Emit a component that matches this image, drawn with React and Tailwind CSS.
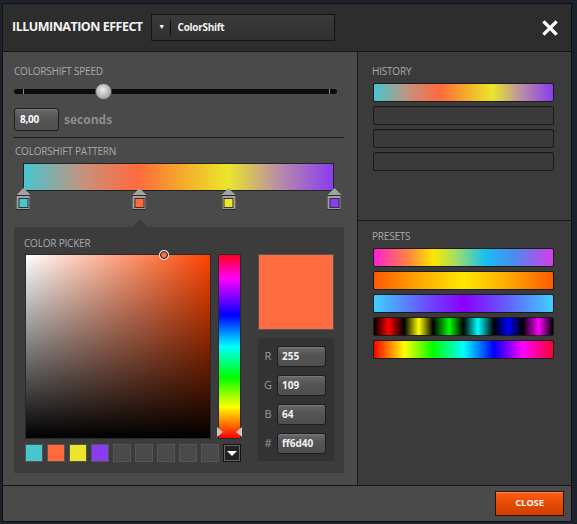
import React from "react";

const patternGradient =
  "bg-[linear-gradient(to_right,#48c6cf_0%,#c9907a_20%,#ff6a3d_37%,#f5a52c_50%,#ebe62a_66%,#b98fa5_82%,#8a3cf0_100%)]";

const presets = [
  "bg-[linear-gradient(to_right,#ff1fd0_0%,#ff8a3a_20%,#ffe600_33%,#a8e060_45%,#18c0f0_62%,#4a8cf0_78%,#d53ce6_100%)]",
  "bg-[linear-gradient(to_right,#ff5a00_0%,#ffa800_25%,#ffe800_50%,#ffa800_75%,#ff5a00_100%)]",
  "bg-[linear-gradient(to_right,#3fd0ff_0%,#6a4cff_30%,#8a00ff_50%,#6a4cff_70%,#3fd0ff_100%)]",
  "bg-[linear-gradient(to_right,#000_0%,#ff0000_8%,#000_17%,#ffff00_25%,#000_33%,#00ff00_42%,#000_50%,#00ffff_58%,#000_67%,#0000ff_75%,#000_83%,#ff00ff_92%,#000_100%)]",
  "bg-[linear-gradient(to_right,#ff0000_0%,#ffff00_17%,#00ff00_33%,#00ffff_50%,#0000ff_67%,#ff00ff_83%,#ff0030_100%)]",
];

const stops = [
  { left: "left-[0%]", color: "bg-[#48c6cf]" },
  { left: "left-[37.3%]", color: "bg-[#ff6a3d]" },
  { left: "left-[66.2%]", color: "bg-[#ebe62a]" },
  { left: "left-[100%]", color: "bg-[#8a3cf0]" },
];

const swatches = [
  "bg-[#48c6cf]",
  "bg-[#ff6a3d]",
  "bg-[#ebe62a]",
  "bg-[#8a3cf0]",
  "bg-[#4a4a4a]",
  "bg-[#4a4a4a]",
  "bg-[#4a4a4a]",
  "bg-[#4a4a4a]",
  "bg-[#4a4a4a]",
];

function Label({ children, className = "" }) {
  return (
    <div className={"text-[10px] leading-[12px] text-[#a9a9a9] tracking-[-0.2px] " + className}>
      {children}
    </div>
  );
}

function Field({ label, value }) {
  return (
    <div className="flex items-center h-[21px]">
      <span className="w-[19px] text-[11px] text-[#9a9a9a] text-center pl-[1px]">{label}</span>
      <div className="w-[49px] h-[21px] rounded-[3px] border border-[#1c1c1c] bg-[linear-gradient(to_bottom,#6a6a6a,#555_40%,#4e4e4e)] shadow-[inset_0_1px_0_#777] flex items-center pl-[4px] text-[10px] font-bold text-[#f2f2f2]">
        {value}
      </div>
    </div>
  );
}

function StopMarker({ left, color }) {
  return (
    <div className={"absolute -top-[3px] -translate-x-1/2 flex flex-col items-center " + left}>
      <div className="w-0 h-0 border-l-[7px] border-r-[7px] border-b-[7px] border-l-transparent border-r-transparent border-b-[#a3a3a3]" />
      <div className="w-[15px] h-[15px] bg-[#a0a0a0] border border-[#2a2a2a] p-[1.5px]">
        <div className={"w-full h-full border border-[#333] " + color} />
      </div>
    </div>
  );
}

export default function App() {
  return (
    <div
      className="w-[577px] h-[524px] bg-[#1d232c] pl-[2px] pt-[3px] overflow-hidden"
      style={{ fontFamily: '"Open Sans", "Noto Sans", sans-serif' }}
    >
      <div className="w-[570px] h-[519px] border border-[#111] flex flex-col bg-[#4a4a4a]">
        {/* header */}
        <div className="h-[48px] shrink-0 bg-[#2d2d2d] border-b border-[#151515] flex items-center pl-[9px] pr-[13px]">
          <span className="text-[12.5px] font-bold text-[#f4f4f4] tracking-[-0.5px]">ILLUMINATION EFFECT</span>
          <div className="ml-[8px] w-[184px] h-[27px] border border-[#141414] bg-[linear-gradient(to_bottom,#3a3a3a,#303030)] flex items-center">
            <span className="w-[18px] text-center text-[7px] text-white pl-[2px]">▼</span>
            <span className="w-px h-[16px] bg-[#111]" />
            <span className="ml-[7px] text-[10px] font-bold text-[#f2f2f2] tracking-[-0.3px]">ColorShift</span>
          </div>
          <svg className="ml-auto" width="16" height="16" viewBox="0 0 16 16">
            <path d="M2.5 2.5 L13.5 13.5 M13.5 2.5 L2.5 13.5" stroke="#fff" strokeWidth="3.2" strokeLinecap="square" />
          </svg>
        </div>

        {/* body */}
        <div className="flex-1 flex border-b border-[#151515]">
          {/* left panel */}
          <div className="w-[354px] shrink-0 bg-[#4a4a4a] pl-[11px] pr-[13px] pt-[13px] flex flex-col">
            <Label>COLORSHIFT SPEED</Label>
            <div className="relative mt-[6px] h-[17px] w-[323px] flex items-center">
              <div className="w-full h-[5px] rounded-full bg-[#0c0c0c]" />
              <div className="absolute left-[9px] top-[6px] w-px h-[5px] bg-[#888]" />
              <div className="absolute left-[315px] top-[6px] w-px h-[5px] bg-[#888]" />
              <div className="absolute left-[81px] top-0 w-[17px] h-[17px] rounded-full border border-[#555] bg-[radial-gradient(circle_at_45%_40%,#f0f0f0,#bdbdbd_45%,#8a8a8a)]" />
            </div>
            <div className="mt-[8px] flex items-center">
              <div className="w-[45px] h-[23px] rounded-[3px] border border-[#1e1e1e] bg-[linear-gradient(to_bottom,#6a6a6a,#555_45%,#4f4f4f)] shadow-[inset_0_1px_0_#777] flex items-center pl-[5px] text-[10px] font-bold text-white tracking-[-0.3px]">
                8,00
              </div>
              <span className="ml-[5px] text-[12px] font-bold text-[#8c8c8c]">seconds</span>
            </div>
            <div className="mt-[6px] h-px w-[330px] bg-[#1a1a1a]" />
            <Label className="mt-[7px] pl-[1px]">COLORSHIFT PATTERN</Label>

            <div className="ml-[9px] w-[311px]">
              <div className={"mt-[6px] h-[28px] border border-[#222] " + patternGradient} />
              <div className="relative h-[19px]">
                {stops.map((s, i) => (
                  <StopMarker key={i} left={s.left} color={s.color} />
                ))}
              </div>
            </div>

            {/* colour picker */}
            <div className="mt-[9px] ml-[118px] w-0 h-0 border-l-[8px] border-r-[8px] border-b-[8px] border-l-transparent border-r-transparent border-b-[#3c3c3c]" />
            <div className="w-[330px] h-[246px] bg-[#3c3c3c] pl-[11px] pt-[10px] flex flex-col">
              <Label className="-ml-[1px]">COLOR PICKER</Label>
              <div className="flex mt-[5px]">
                <div className="w-[216px] flex flex-col">
                  <div className="flex">
                    <div className="relative w-[186px] h-[185px] border border-[#2a2a2a] bg-[linear-gradient(to_top,#000,transparent),linear-gradient(to_right,#fff,#ff4300)]">
                      <div className="absolute left-[134px] -top-[4px] w-[8px] h-[8px] rounded-full border border-[#111] bg-[#ff6d40] shadow-[0_0_0_1px_#fff]" />
                    </div>
                    <div className="relative ml-[7px] w-[23px] h-[185px] border border-[#2a2a2a] bg-[linear-gradient(to_bottom,#ff0020_0%,#ff00ff_13%,#0000ff_33%,#00ffff_50%,#00ff00_67%,#ffff00_83%,#ff0000_100%)]">
                      <div className="absolute -left-[2px] top-[172px] w-0 h-0 border-t-[5px] border-b-[5px] border-l-[6px] border-t-transparent border-b-transparent border-l-[#c8c8c8]" />
                      <div className="absolute -right-[2px] top-[172px] w-0 h-0 border-t-[5px] border-b-[5px] border-r-[6px] border-t-transparent border-b-transparent border-r-[#c8c8c8]" />
                    </div>
                  </div>
                  <div className="mt-[5px] flex gap-[4px]">
                    {swatches.map((c, i) => (
                      <div key={i} className={"w-[18px] h-[18px] border border-[#555] " + c} />
                    ))}
                    <div className="w-[18px] h-[18px] bg-[#222] border border-[#111] shadow-[inset_0_0_0_1px_#666] flex items-center justify-center">
                      <div className="w-0 h-0 border-l-[5px] border-r-[5px] border-t-[5px] border-l-transparent border-r-transparent border-t-white" />
                    </div>
                  </div>
                </div>
                <div className="ml-[17px] w-[76px] flex flex-col">
                  <div className="h-[76px] bg-[#ff6d40] border border-[#555]" />
                  <div className="mt-[8px] h-[123px] bg-[#333] pt-[8px] flex flex-col gap-[8px]">
                    <Field label="R" value="255" />
                    <Field label="G" value="109" />
                    <Field label="B" value="64" />
                    <Field label="#" value="ff6d40" />
                  </div>
                </div>
              </div>
            </div>
          </div>

          {/* right panel */}
          <div className="flex-1 bg-[#3b3b3b] border-l border-[#1a1a1a] flex flex-col">
            <div className="h-[169px] pl-[14px] pt-[13px] border-b border-[#1a1a1a]">
              <Label>HISTORY</Label>
              <div className="mt-[6px] flex flex-col gap-[4px] pl-[1px]">
                <div className={"w-[181px] h-[19px] rounded-[2px] border border-[#1a1a1a] " + patternGradient} />
                <div className="w-[181px] h-[19px] rounded-[2px] border border-[#1a1a1a] bg-[#3a3a3a] shadow-[inset_0_1px_0_#333]" />
                <div className="w-[181px] h-[19px] rounded-[2px] border border-[#1a1a1a] bg-[#3a3a3a] shadow-[inset_0_1px_0_#333]" />
                <div className="w-[181px] h-[19px] rounded-[2px] border border-[#1a1a1a] bg-[#3a3a3a] shadow-[inset_0_1px_0_#333]" />
              </div>
            </div>
            <div className="pl-[14px] pt-[9px]">
              <Label>PRESETS</Label>
              <div className="mt-[6px] flex flex-col gap-[4px] pl-[1px]">
                {presets.map((p, i) => (
                  <div key={i} className={"w-[181px] h-[19px] rounded-[2px] border border-[#1a1a1a] " + p} />
                ))}
              </div>
            </div>
          </div>
        </div>

        {/* footer */}
        <div className="h-[35px] shrink-0 bg-[#4a4a4a] flex items-center justify-end pr-[7px]">
          <button className="w-[69px] h-[25px] border border-[#2a1206] bg-[linear-gradient(to_bottom,#ff5e14,#e34a06_50%,#d23d00)] shadow-[inset_0_1px_0_#ff8a4a] text-[9.5px] font-bold text-[#fff3ea] tracking-[-0.2px]">
            CLOSE
          </button>
        </div>
      </div>
    </div>
  );
}
